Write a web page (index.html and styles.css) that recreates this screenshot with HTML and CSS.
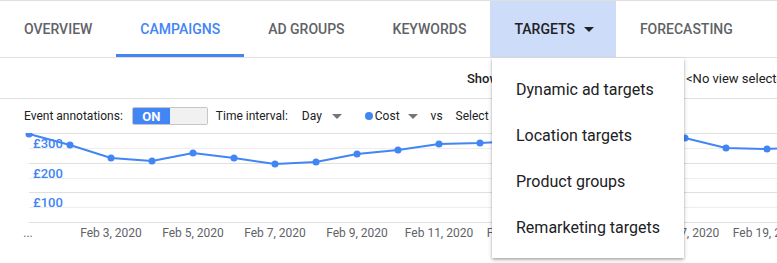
FILE: index.html
```html
<!DOCTYPE html>
<html lang="en">
<head>
    <meta charset="UTF-8">
    <title>Campaigns</title>
    <link rel="stylesheet" href="styles.css">
</head>
<body>
    <div class="tabs">
        <div class="tab">Overview</div>
        <div class="tab active">Campaigns</div>
        <div class="tab">Ad groups</div>
        <div class="tab">Keywords</div>
        <div class="tab open">Targets<span class="caret dark"></span></div>
        <div class="tab">Forecasting</div>
    </div>

    <div class="view-row">
        <span class="view-label">Showing view:</span>
        <span class="view-value">&lt;No view selected&gt;</span>
    </div>

    <div class="toolbar">
        <span>Event annotations:</span>
        <div class="toggle"><span class="on">ON</span><span class="off"></span></div>
        <span class="ti">Time interval:</span>
        <span class="day">Day <span class="caret"></span></span>
        <span class="metric"><span class="dot"></span>Cost <span class="caret"></span></span>
        <span class="vs">vs</span>
        <span class="pick">Select a metric</span>
    </div>

    <svg class="chart" width="777" height="130" viewBox="0 0 777 130">
        <g class="grid">
            <line x1="29" y1="0.5" x2="777" y2="0.5"/>
            <line class="minor" x1="29" y1="15.5" x2="777" y2="15.5"/>
            <line x1="29" y1="30.5" x2="777" y2="30.5"/>
            <line class="minor" x1="29" y1="45.5" x2="777" y2="45.5"/>
            <line x1="29" y1="59.5" x2="777" y2="59.5"/>
            <line class="minor" x1="29" y1="74.5" x2="777" y2="74.5"/>
            <line x1="29" y1="89.5" x2="777" y2="89.5"/>
        </g>
        <polyline class="series" points="29,1 70,12 111,25 152,28 193,20 234,25 275,31 316,29 357,21 398,17 439,11 480,10 521,8 562,6 603,9 644,3 685,5 726,15 767,16 808,14"/>
        <g class="pts">
            <circle cx="29" cy="1" r="3.5"/><circle cx="70" cy="12" r="3.5"/>
            <circle cx="111" cy="25" r="3.5"/><circle cx="152" cy="28" r="3.5"/>
            <circle cx="193" cy="20" r="3.5"/><circle cx="234" cy="25" r="3.5"/>
            <circle cx="275" cy="31" r="3.5"/><circle cx="316" cy="29" r="3.5"/>
            <circle cx="357" cy="21" r="3.5"/><circle cx="398" cy="17" r="3.5"/>
            <circle cx="439" cy="11" r="3.5"/><circle cx="480" cy="10" r="3.5"/>
            <circle cx="521" cy="8" r="3.5"/><circle cx="562" cy="6" r="3.5"/>
            <circle cx="603" cy="9" r="3.5"/><circle cx="644" cy="3" r="3.5"/>
            <circle cx="685" cy="5" r="3.5"/><circle cx="726" cy="15" r="3.5"/>
            <circle cx="767" cy="16" r="3.5"/>
        </g>
        <g class="ylab">
            <text x="33" y="15">£300</text>
            <text x="33" y="45">£200</text>
            <text x="33" y="74">£100</text>
        </g>
        <g class="xlab">
            <text x="28" y="104" text-anchor="start">...</text>
            <text x="111" y="104">Feb 3, 2020</text>
            <text x="193" y="104">Feb 5, 2020</text>
            <text x="275" y="104">Feb 7, 2020</text>
            <text x="357" y="104">Feb 9, 2020</text>
            <text x="439" y="104">Feb 11, 2020</text>
            <text x="521" y="104">Feb 13, 2020</text>
            <text x="685" y="104">Feb 17, 2020</text>
            <text x="767" y="104">Feb 19, 2020</text>
        </g>
    </svg>

    <div class="menu">
        <div class="item">Dynamic ad targets</div>
        <div class="item">Location targets</div>
        <div class="item">Product groups</div>
        <div class="item">Remarketing targets</div>
    </div>
</body>
</html>
```

FILE: styles.css
```css
body {
    margin: 0;
    font-family: Roboto, "Liberation Sans", sans-serif;
    color: #202124;
    background: #fff;
    width: 777px;
    height: 263px;
    overflow: hidden;
    position: relative;
}
.tabs {
    display: flex;
    height: 56px;
    border-top: 1px solid #e0e0e0;
    border-bottom: 1px solid #e0e0e0;
}
.tab {
    position: relative;
    display: flex;
    align-items: center;
    padding: 0 24px;
    font-size: 14px;
    font-weight: 500;
    text-transform: uppercase;
    color: #5f6368;
    white-space: nowrap;
}
.tab.active { color: #4285f4; }
.tab.active::after {
    content: "";
    position: absolute;
    left: 0;
    right: 0;
    bottom: 0;
    height: 3px;
    background: #4285f4;
}
.tab.open { background: #cddcf8; color: #202124; padding-right: 22px; }
.caret {
    display: inline-block;
    width: 0;
    height: 0;
    border-left: 5px solid transparent;
    border-right: 5px solid transparent;
    border-top: 5px solid #757575;
    margin-left: 7px;
    vertical-align: middle;
}
.caret.dark { border-top-color: #202124; margin-left: 9px; }

.view-row {
    height: 40px;
    border-bottom: 1px solid #e0e0e0;
    display: flex;
    align-items: center;
    font-size: 13px;
    padding-left: 467px;
}
.view-label { font-weight: 500; width: 219px; flex-shrink: 0; }
.view-value { white-space: nowrap; flex-shrink: 0; }

.toolbar {
    height: 34px;
    display: flex;
    align-items: center;
    padding-left: 24px;
    font-size: 12px;
    white-space: nowrap;
}
.toggle {
    display: flex;
    width: 76px;
    height: 18px;
    margin-left: 9px;
    border: 1px solid #c6c6c6;
    box-sizing: border-box;
    border-radius: 2px;
    overflow: hidden;
}
.toggle .on {
    width: 37px;
    background: #4285f4;
    color: #fff;
    font-weight: 700;
    font-size: 13px;
    display: flex;
    align-items: center;
    justify-content: center;
}
.toggle .off { flex: 1; background: #f1f1f1; }
.ti { margin-left: 8px; }
.day { margin-left: 14px; }
.metric { margin-left: 23px; display: flex; align-items: center; }
.dot {
    width: 8px;
    height: 8px;
    border-radius: 50%;
    background: #4285f4;
    margin-right: 2px;
}
.metric .caret { margin-left: 8px; }
.vs { margin-left: 13px; }
.pick { margin-left: 13px; }

.chart { display: block; }
.grid line { stroke: #e0e0e0; stroke-width: 1; }
.grid line.minor { stroke: #eeeeee; }
.series { fill: none; stroke: #4285f4; stroke-width: 2; }
.pts circle { fill: #4285f4; }
.ylab text {
    fill: #4285f4;
    font-size: 13px;
    font-weight: 500;
}
.xlab text {
    fill: #5f6368;
    font-size: 12px;
    text-anchor: middle;
}

.menu {
    position: absolute;
    left: 492px;
    top: 58px;
    width: 192px;
    padding: 8px 0;
    background: #fff;
    box-shadow: 0 2px 4px rgba(0, 0, 0, 0.25), 0 1px 2px rgba(0, 0, 0, 0.15);
}
.item {
    height: 46px;
    display: flex;
    align-items: center;
    padding-left: 24px;
    font-size: 16px;
    color: #202124;
    white-space: nowrap;
}
```
